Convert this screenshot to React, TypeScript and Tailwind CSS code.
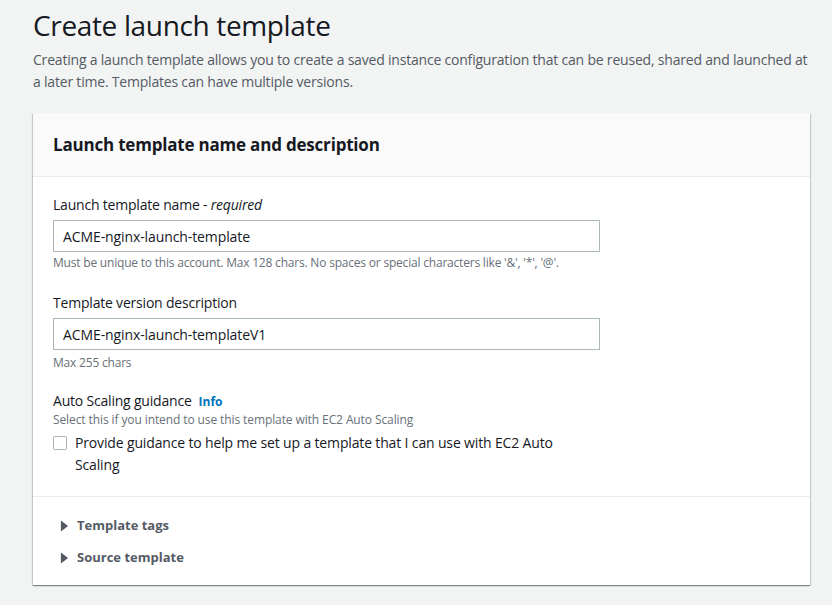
import { useState } from 'react';

function Caret() {
  return (
    <svg viewBox="0 0 10 12" className="h-[12px] w-[9px] fill-[#545b64]">
      <path d="M1 0 L9 6 L1 12 Z" />
    </svg>
  );
}

function Expander({ title }: { title: string }) {
  return (
    <button className="flex items-center gap-[8px] pl-[7px] h-[32px] text-[13px] font-bold text-[#545b64]">
      <Caret />
      {title}
    </button>
  );
}

export default function App() {
  const [name, setName] = useState('ACME-nginx-launch-template');
  const [desc, setDesc] = useState('ACME-nginx-launch-templateV1');
  const [guide, setGuide] = useState(false);

  return (
    <div className="min-h-[605px] bg-[#f2f3f3] pl-[33px] pr-[20px] pt-[5px] pb-[20px] font-['Open_Sans',sans-serif] text-[#16191f]">
      <h1 className="text-[28px] leading-[40px] font-normal tracking-[-0.35px]">Create launch template</h1>
      <p className="mt-[4px] w-[777px] text-[14px] leading-[22px] text-[#545b64] tracking-[-0.2px]">
        Creating a launch template allows you to create a saved instance configuration that can be reused, shared and launched at
        a later time. Templates can have multiple versions.
      </p>

      <div className="mt-[20px] w-[777px] bg-white shadow-[0_1px_1px_0_rgba(0,28,36,0.3),1px_1px_1px_0_rgba(0,28,36,0.15),-1px_1px_1px_0_rgba(0,28,36,0.15)]">
        {/* header */}
        <div className="h-[64px] flex items-center px-[20px] bg-[#fafafa] border-b border-[#eaeded]">
          <h2 className="text-[17px] font-bold leading-[22px] tracking-[-0.2px]">Launch template name and description</h2>
        </div>

        <div className="px-[20px] pt-[17px] pb-[20px] border-b border-[#eaeded]">
          <label className="block text-[14px] leading-[22px] tracking-[-0.2px]">
            Launch template name - <i>required</i>
          </label>
          <input
            value={name}
            onChange={e => setName(e.target.value)}
            className="mt-[4px] block w-[547px] h-[32px] px-[9px] border border-[#aab7b8] text-[14px] tracking-[-0.1px] text-[#16191f] outline-none"
          />
          <p className="mt-[2px] text-[12px] leading-[18px] text-[#687078] tracking-[-0.2px]">
            Must be unique to this account. Max 128 chars. No spaces or special characters like '&amp;', '*', '@'.
          </p>

          <label className="mt-[20px] block text-[14px] leading-[22px] tracking-[-0.2px]">Template version description</label>
          <input
            value={desc}
            onChange={e => setDesc(e.target.value)}
            className="mt-[4px] block w-[547px] h-[32px] px-[9px] border border-[#aab7b8] text-[14px] tracking-[-0.1px] text-[#16191f] outline-none"
          />
          <p className="mt-[4px] text-[12px] leading-[18px] text-[#687078] tracking-[-0.2px]">Max 255 chars</p>

          <div className="mt-[18px] flex items-baseline gap-[7px]">
            <span className="text-[14px] leading-[22px] tracking-[-0.2px]">Auto Scaling guidance</span>
            <a className="text-[12px] font-bold text-[#0073bb]">Info</a>
          </div>
          <p className="text-[12px] leading-[16px] text-[#687078] tracking-[-0.1px]">Select this if you intend to use this template with EC2 Auto Scaling</p>
          <label className="mt-[4px] flex items-start gap-[8px] w-[520px]">
            <input
              type="checkbox"
              checked={guide}
              onChange={e => setGuide(e.target.checked)}
              className="mt-[4px] h-[14px] w-[14px] shrink-0 appearance-none border border-[#aab7b8] rounded-[2px] bg-white"
            />
            <span className="text-[14px] leading-[22px] tracking-[-0.15px]">
              Provide guidance to help me set up a template that I can use with EC2 Auto Scaling
            </span>
          </label>
        </div>

        <div className="px-[20px] pt-[13px] pb-[11px]">
          <Expander title="Template tags" />
          <Expander title="Source template" />
        </div>
      </div>
    </div>
  );
}
